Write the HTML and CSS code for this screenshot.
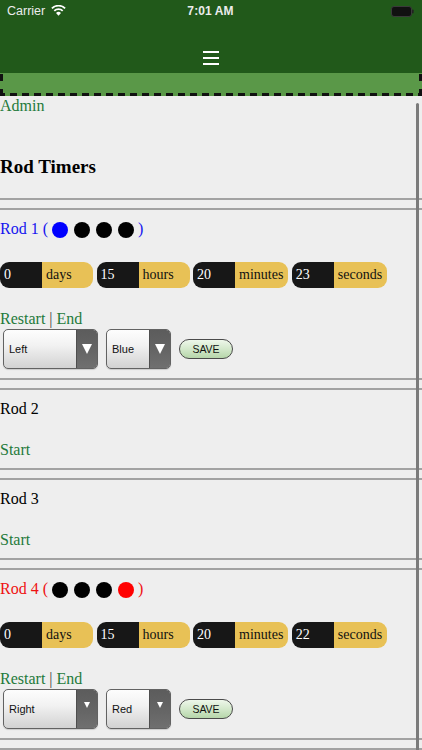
FILE: index.html
```html
<!DOCTYPE html>
<html lang="en">
<head>
<meta charset="utf-8">
<meta name="viewport" content="width=device-width, initial-scale=1">
<title>Rod Timers</title>
<link rel="stylesheet" href="styles.css">
</head>
<body>
<header class="topbar">
  <div class="status">
    <div class="carrier">Carrier
      <svg class="wifi" width="15" height="11" viewBox="0 0 15 11" aria-hidden="true">
        <path d="M7.5 10.8 L5 8 A3.6 3.6 0 0 1 10 8 Z" fill="#fff"/>
        <path d="M3.3 5.9 A6 6 0 0 1 11.7 5.9" fill="none" stroke="#fff" stroke-width="1.8"/>
        <path d="M0.9 3.4 A9.4 9.4 0 0 1 14.1 3.4" fill="none" stroke="#fff" stroke-width="1.8"/>
      </svg>
    </div>
    <div class="time">7:01 AM</div>
    <div class="battery-wrap">
      <svg class="battery" width="23" height="11" viewBox="0 0 23 11" aria-hidden="true">
        <rect x="0.5" y="0.5" width="20" height="10" rx="2.5" fill="#111" stroke="#3a3a3a"/>
        <rect x="21" y="3.5" width="1.6" height="4" rx="0.8" fill="#222"/>
      </svg>
    </div>
  </div>
  <div class="nav">
    <span class="burger"><i></i><i></i><i></i></span>
  </div>
</header>
<div class="band"></div>

<main class="content">
  <div class="line"><a class="link" href="#">Admin</a></div>
  <h2 class="page-title">Rod Timers</h2>
  <hr class="rule">

  <section class="rod">
    <div class="rod-title is-blue">Rod 1 (<span class="dots"><span class="dot dot-blue"></span><span class="dot"></span><span class="dot"></span><span class="dot"></span></span>)</div>
    <div class="timer">
      <div class="pill"><span class="num">0</span><span class="unit">days</span></div>
      <div class="pill"><span class="num">15</span><span class="unit">hours</span></div>
      <div class="pill"><span class="num">20</span><span class="unit">minutes</span></div>
      <div class="pill"><span class="num">23</span><span class="unit">seconds</span></div>
    </div>
    <div class="actions"><a class="link" href="#">Restart</a> <span class="sep">|</span> <a class="link" href="#">End</a></div>
    <div class="controls">
      <div class="select select-wide"><span class="value">Left</span><span class="arrow"><i class="tri"></i></span></div>
      <div class="select select-narrow"><span class="value">Blue</span><span class="arrow"><i class="tri"></i></span></div>
      <button class="save" type="button">SAVE</button>
    </div>
  </section>

  <section class="rod">
    <div class="rod-title">Rod 2</div>
    <div class="start"><a class="link" href="#">Start</a></div>
  </section>

  <section class="rod">
    <div class="rod-title">Rod 3</div>
    <div class="start"><a class="link" href="#">Start</a></div>
  </section>

  <section class="rod">
    <div class="rod-title is-red">Rod 4 (<span class="dots"><span class="dot"></span><span class="dot"></span><span class="dot"></span><span class="dot dot-red"></span></span>)</div>
    <div class="timer">
      <div class="pill"><span class="num">0</span><span class="unit">days</span></div>
      <div class="pill"><span class="num">15</span><span class="unit">hours</span></div>
      <div class="pill"><span class="num">20</span><span class="unit">minutes</span></div>
      <div class="pill"><span class="num">22</span><span class="unit">seconds</span></div>
    </div>
    <div class="actions"><a class="link" href="#">Restart</a> <span class="sep">|</span> <a class="link" href="#">End</a></div>
    <div class="controls">
      <div class="select select-wide"><span class="value">Right</span><span class="arrow"><i class="tri tri-small"></i></span></div>
      <div class="select select-narrow"><span class="value">Red</span><span class="arrow"><i class="tri tri-small"></i></span></div>
      <button class="save" type="button">SAVE</button>
    </div>
  </section>
  <hr class="rule rule-end">
</main>

<div class="scrollbar" aria-hidden="true"></div>
</body>
</html>
```

FILE: styles.css
```css
html, body {
  margin: 0;
  padding: 0;
}

body {
  position: relative;
  width: 422px;
  height: 750px;
  overflow: hidden;
  background: #eeeeee;
  font-family: "Liberation Serif", "Times New Roman", serif;
  font-size: 16px;
  line-height: 18px;
  color: #000;
}

/* ---------- top bar ---------- */
.topbar {
  background: #21591a;
}

.status {
  height: 22px;
  display: grid;
  grid-template-columns: 1fr auto 1fr;
  align-items: center;
  padding: 0 8px 0 7px;
  font-family: "Liberation Sans", Arial, sans-serif;
  color: #ececec;
}

.carrier {
  display: flex;
  align-items: center;
  gap: 6px;
  font-size: 12.5px;
}

.wifi {
  display: block;
  margin-top: -1px;
}

.time {
  font-size: 12px;
  font-weight: 700;
  letter-spacing: 0.1px;
}

.battery-wrap {
  display: flex;
  justify-content: flex-end;
}

.battery {
  display: block;
}

.nav {
  height: 51px;
  display: flex;
  justify-content: center;
  align-items: flex-end;
  padding-bottom: 8px;
  box-sizing: border-box;
}

.burger {
  display: flex;
  flex-direction: column;
  justify-content: space-between;
  width: 16px;
  height: 14px;
}

.burger i {
  display: block;
  height: 2.4px;
  background: #fff;
}

.band {
  height: 23px;
  background-color: #5a9848;
  background-image:
    repeating-linear-gradient(to right, #111 0 5px, transparent 5px 10px, #111 10px 12px),
    repeating-linear-gradient(to bottom, transparent 0 1px, #111 1px 8px, transparent 8px 15px),
    repeating-linear-gradient(to bottom, transparent 0 1px, #111 1px 8px, transparent 8px 15px);
  background-size: 100% 3px, 3px 100%, 3px 100%;
  background-position: 0 100%, 0 0, 100% 0;
  background-repeat: no-repeat;
}

/* ---------- content ---------- */
.content {
  display: block;
  padding-top: 1px;
}

.line {
  height: 18px;
}

.link {
  color: #1f7a3b;
  text-decoration: none;
}

.page-title {
  margin: 41px 0 20px;
  font-size: 19px;
  line-height: 22px;
  font-weight: 700;
}

.rule {
  margin: 0;
  height: 0;
  border: 0;
  border-top: 2px solid #a2a2a2;
}

.rule-end {
  margin-top: 8px;
}

.rod {
  margin-top: 8px;
  padding: 10px 0 9px;
  border-top: 2px solid #a2a2a2;
  border-bottom: 2px solid #a2a2a2;
}

.rod-title {
  height: 18px;
  white-space: nowrap;
}

.is-blue { color: #1515f0; }
.is-red { color: #ee1111; }

.dots {
  display: inline-flex;
  gap: 6px;
  margin: 0 4px;
  vertical-align: -4px;
}

.dot {
  display: block;
  width: 16px;
  height: 16px;
  border-radius: 50%;
  background: #000;
}

.dot-blue { background: #0000ff; }
.dot-red { background: #ff0000; }

.timer {
  display: flex;
  gap: 3.5px;
  margin-top: 24px;
  font-size: 14px;
  line-height: 26px;
}

.pill {
  display: flex;
  height: 26px;
  border-radius: 9px;
  overflow: hidden;
}

.num {
  width: 42px;
  box-sizing: border-box;
  padding-left: 4px;
  background: #171717;
  color: #fff;
}

.unit {
  min-width: 51px;
  box-sizing: border-box;
  padding: 0 5px 0 4px;
  background: #e8c156;
  color: #111;
}

.actions {
  margin-top: 22px;
  height: 18px;
}

.sep {
  color: #444;
}

.start {
  margin-top: 23px;
  height: 18px;
}

.controls {
  display: flex;
  align-items: center;
  gap: 8px;
  margin-top: 1px;
  padding-left: 3px;
  height: 40px;
}

.select {
  display: flex;
  height: 40px;
  box-sizing: border-box;
  border: 1px solid #626262;
  border-radius: 5px;
  overflow: hidden;
  background: linear-gradient(#fdfdfd, #f2f2f2 40%, #d2d2d2);
  font-family: "Liberation Sans", Arial, sans-serif;
  font-size: 11px;
  color: #111;
  box-shadow: 0 1px 1px rgba(0, 0, 0, 0.15);
}

.select-wide { width: 95px; }
.select-narrow { width: 65px; }

.value {
  flex: 1;
  display: flex;
  align-items: center;
  padding-left: 5px;
}

.arrow {
  width: 20px;
  display: flex;
  align-items: center;
  justify-content: center;
  background: linear-gradient(#5c5c5c, #666 60%, #707070);
  border-left: 1px solid #4e4e4e;
}

.tri {
  display: block;
  width: 0;
  height: 0;
  border-left: 5.5px solid transparent;
  border-right: 5.5px solid transparent;
  border-top: 10px solid #fff;
}

.tri-small {
  border-left-width: 3.5px;
  border-right-width: 3.5px;
  border-top-width: 6px;
  margin-top: -8px;
}

.save {
  width: 54px;
  height: 20px;
  margin: 0;
  padding: 0;
  border: 1px solid #4a4a4a;
  border-radius: 10px;
  background: linear-gradient(#eef7ea, #d3e8cb 50%, #b6d6aa);
  font-family: "Liberation Sans", Arial, sans-serif;
  font-size: 10.5px;
  color: #111;
  line-height: 18px;
}

/* ---------- overlay scrollbar ---------- */
.scrollbar {
  position: absolute;
  top: 103px;
  right: 3px;
  width: 3px;
  height: 660px;
  border-radius: 2px;
  background: #7a7a7a;
}
```
